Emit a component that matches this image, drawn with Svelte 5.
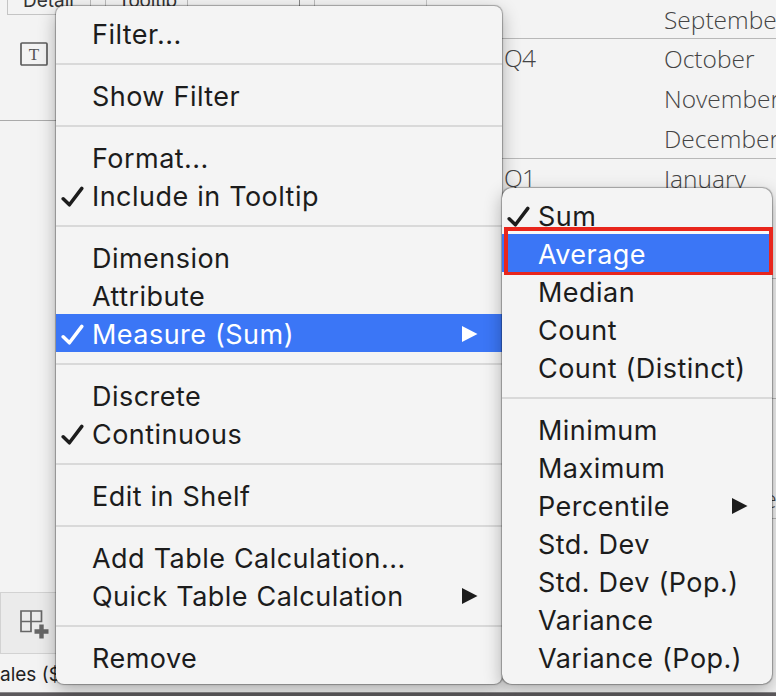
<script lang="ts">
  type Item = {
    label: string;
    checked?: boolean;
    submenu?: boolean;
    active?: boolean;
  };

  // each inner list is a group, separated by a rule
  const fieldMenu: Item[][] = [
    [{ label: "Filter..." }],
    [{ label: "Show Filter" }],
    [{ label: "Format..." }, { label: "Include in Tooltip", checked: true }],
    [
      { label: "Dimension" },
      { label: "Attribute" },
      { label: "Measure (Sum)", checked: true, submenu: true, active: true },
    ],
    [{ label: "Discrete" }, { label: "Continuous", checked: true }],
    [{ label: "Edit in Shelf" }],
    [{ label: "Add Table Calculation..." }, { label: "Quick Table Calculation", submenu: true }],
    [{ label: "Remove" }],
  ];

  const measureMenu: Item[][] = [
    [
      { label: "Sum", checked: true },
      { label: "Average", active: true },
      { label: "Median" },
      { label: "Count" },
      { label: "Count (Distinct)" },
    ],
    [
      { label: "Minimum" },
      { label: "Maximum" },
      { label: "Percentile", submenu: true },
      { label: "Std. Dev" },
      { label: "Std. Dev (Pop.)" },
      { label: "Variance" },
      { label: "Variance (Pop.)" },
    ],
  ];

  const quarters = [
    { name: "", months: ["September"] },
    { name: "Q4", months: ["October", "November", "December"] },
    { name: "Q1", months: ["January", "", ""] },
    { name: "", months: ["", "", ""] },
    { name: "", months: ["", "", "September"] },
  ];
</script>

{#snippet menu(groups: Item[][])}
  {#each groups as group, i}
    {#if i > 0}<div class="separator"></div>{/if}
    {#each group as item}
      <div class="item" class:active={item.active}>
        <span class="check">
          {#if item.checked}
            <svg width="24" height="24" viewBox="0 0 24 24" fill="none" stroke="currentColor" stroke-width="3.5" stroke-linecap="round" stroke-linejoin="round">
              <path d="M2.2 13.8L8.4 19.8L20.8 3.4"></path>
            </svg>
          {/if}
        </span>
        <span class="label">{item.label}</span>
        {#if item.submenu}
          <svg class="arrow" width="16" height="18" viewBox="0 0 16 18" fill="currentColor">
            <path d="M0 1L15.5 9L0 17Z"></path>
          </svg>
        {/if}
      </div>
    {/each}
  {/each}
{/snippet}

<div class="window">
  <div class="workspace">
    <aside class="sidebar">
      <div class="marks">
        <div class="shelf">
          <span class="card">Detail</span>
          <span class="card tooltip">Tooltip</span>
          <span class="card spare"></span>
          <span class="card last"></span>
        </div>
        <div class="pill">
          <svg width="28" height="24" viewBox="0 0 28 24" fill="none">
            <rect x="1" y="1" width="26" height="22" rx="1" stroke="#5c5c5c" stroke-width="1.7"></rect>
            <text x="14" y="18" text-anchor="middle" font-family="Liberation Serif, serif" font-size="17" fill="#555">T</text>
          </svg>
        </div>
      </div>
      <div class="blank"></div>
      <div class="tabs">
        <svg width="30" height="30" viewBox="0 0 30 30" fill="none">
          <path d="M1 1H21.5V11.5H1ZM11 1V21.5H1V11.5" stroke="#666" stroke-width="1.7"></path>
          <path d="M21.5 14.5V28.5M14.5 21.5H28.5" stroke="#666" stroke-width="4.4"></path>
        </svg>
      </div>
      <div class="status">ales ($)</div>
    </aside>
    <main class="sheet">
      {#each quarters as quarter}
        <div class="quarter">
          <span class="name">{quarter.name}</span>
          <div class="months">
            {#each quarter.months as month}
              <span class="month">{month}</span>
            {/each}
          </div>
        </div>
      {/each}
    </main>
  </div>
  <div class="edge"></div>

  <div class="menu field-menu">{@render menu(fieldMenu)}</div>
  <div class="menu measure-menu">{@render menu(measureMenu)}</div>
  <div class="highlight"></div>
</div>

<style>
  :global(body) { background: #f3f3f3; }
  .window {
    position: relative;
    display: flex;
    flex-direction: column;
    width: 776px;
    height: 696px;
    overflow: hidden;
    background: #f3f3f3;
    font-family: Inter, "Liberation Sans", sans-serif;
  }
  .workspace { display: flex; flex: 1; min-height: 0; }
  .sidebar {
    display: flex;
    flex-direction: column;
    width: 502px;
    flex: none;
  }
  .marks {
    height: 121px;
    box-sizing: border-box;
    border-bottom: 1px solid #aaa;
  }
  .shelf {
    display: flex;
    width: 420px;
    height: 15px;
    box-sizing: border-box;
    margin-left: 7px;
    border: 1px solid #c4c4c4;
    border-top: none;
    font-size: 19px;
    line-height: 1px;
    color: #333;
  }
  .card {
    flex: none;
    width: 83px;
    height: 6px;
    padding-left: 15px;
    box-sizing: border-box;
    border-right: 1px solid #bbb;
  }
  .card.tooltip {
    margin-left: 14px;
    padding-left: 12px;
    border-left: 1px solid #bbb;
    letter-spacing: -0.3px;
  }
  .card.spare { width: 112px; border-right-color: #888; }
  .card.last { margin-left: 14px; border-left: 1px solid #bbb; border-right: none; }
  .pill { padding: 27px 0 0 20px; }
  .blank { flex: 1; }
  .tabs {
    height: 62px;
    box-sizing: border-box;
    padding: 17px 0 0 19px;
    border: 1px solid #d2d2d2;
    background: #ebebeb;
  }
  .status {
    height: 38px;
    line-height: 41px;
    font-size: 19px;
    color: #222;
    white-space: nowrap;
  }
  .sheet {
    flex: 1;
    font-family: "Open Sans", "Noto Sans", sans-serif;
    font-size: 24.5px;
    font-weight: 300;
    color: #444;
    overflow: hidden;
  }
  .quarter {
    display: grid;
    grid-template-columns: 160px 1fr;
    height: 120px;
    box-sizing: border-box;
    padding-left: 2px;
    line-height: 40px;
    border-bottom: 1px solid #b8b8b8;
  }
  .quarter:first-child { height: 39px; }
  .name { line-height: 37px; letter-spacing: -0.8px; }
  .months { display: flex; flex-direction: column; }
  .month { height: 40px; }
  .edge { height: 3px; background: #5c595c; border-top: 1px solid #8a888a; }

  .menu {
    position: absolute;
    box-sizing: border-box;
    background: #f4f4f4;
    box-shadow: 0 0 1px 0.5px rgba(0, 0, 0, 0.3), 0 6px 18px rgba(0, 0, 0, 0.3);
    color: #1c1c1c;
  }
  .field-menu {
    left: 56px;
    top: 6px;
    width: 446px;
    height: 678px;
    padding-top: 8px;
    border-radius: 8px;
  }
  .measure-menu {
    left: 502px;
    top: 188px;
    width: 270px;
    height: 496px;
    padding-top: 8px;
    border-radius: 10px;
  }
  .item {
    display: flex;
    align-items: center;
    height: 38px;
    padding: 2px 24px 0 5px;
    box-sizing: border-box;
  }
  .item.active { background: #3b76f6; color: #fff; }
  .check { display: flex; width: 31px; flex: none; padding-top: 2px; }
  .label {
    flex: 1;
    padding-top: 2px;
    font-size: 27px;
    line-height: 36px;
    letter-spacing: 0.46px;
    word-spacing: 0.5px;
    white-space: nowrap;
  }
  .separator {
    height: 24px;
    display: flex;
    align-items: center;
  }
  .separator::before { content: ""; flex: 1; height: 2px; background: #d9d9d9; }
  .highlight {
    position: absolute;
    left: 504px;
    top: 227px;
    width: 269px;
    height: 48px;
    box-sizing: border-box;
    border: 4px solid #e8261c;
    border-bottom-width: 3px;
    box-shadow: inset 0 3px 0 #f8f8f8;
  }
</style>
